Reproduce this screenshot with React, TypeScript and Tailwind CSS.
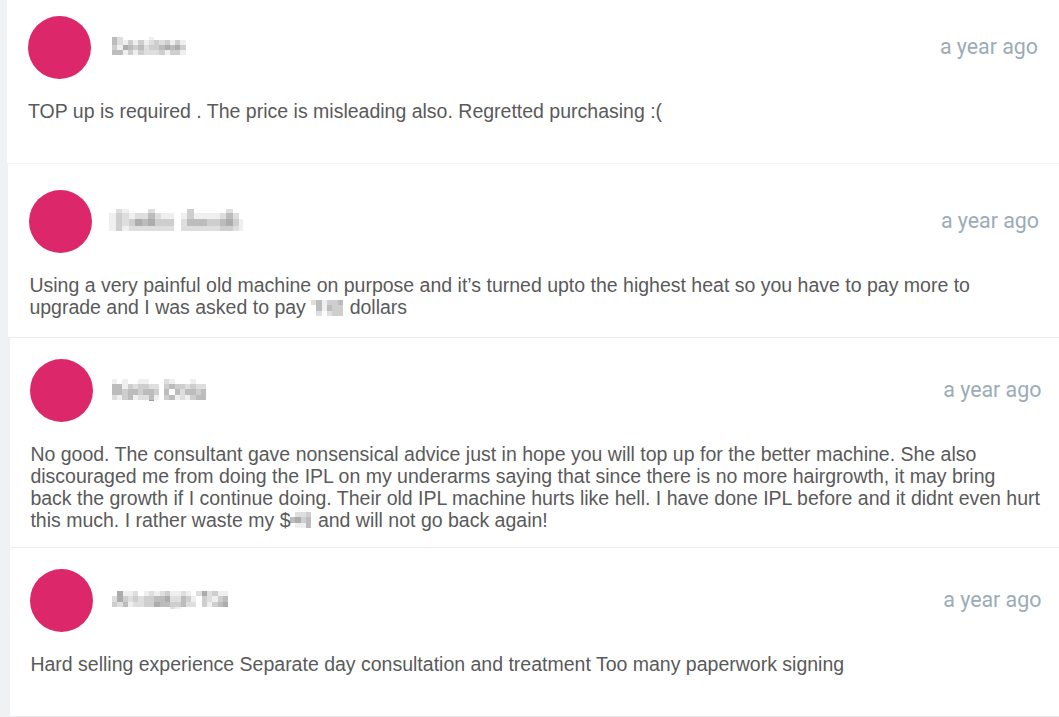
import { Fragment } from 'react';

type Mosaic = {
  cell: number;
  width: number;
  height: number;
  // y, height and one darkness digit (0-9) for every cell of the row
  rows: [number, number, string][];
};

type Review = {
  name: Mosaic;
  nameClass: string;
  text: (string | Mosaic)[];
  card: string;
};

const reviews: Review[] = [
  {
    name: {
      cell: 5.25,
      width: 74,
      height: 18,
      rows: [
        [0, 2.7, '42000001000000'],
        [2.7, 5.1, '42131312323131'],
        [7.8, 5.1, '31543423345453'],
        [12.9, 5.1, '44131322231331'],
      ],
    },
    nameClass: 'ml-[21px] mb-[3px]',
    text: ['TOP up is required . The price is misleading also. Regretted purchasing :('],
    card: 'ml-[7px] h-[164px] border-[#f3f3f5] pt-4 pl-[21px] pr-[21px]',
  },
  {
    name: {
      cell: 6.5,
      width: 134,
      height: 22,
      rows: [
        [0, 3.7, '021000200000300000200'],
        [3.7, 6.5, '132122421101311112420'],
        [10.2, 6.5, '132354533302444334531'],
        [16.7, 5.3, '131222222202222223321'],
      ],
    },
    nameClass: 'ml-[17px] mb-[4px]',
    text: [
      'Using a very painful old machine on purpose and it’s turned upto the highest heat so you have to pay more to upgrade and I was asked to pay ',
      {
        cell: 5.3,
        width: 33,
        height: 16,
        rows: [
          [0, 5.3, '241334'],
          [5.3, 5.3, '041433'],
          [10.6, 5.3, '020233'],
        ],
      },
      ' dollars',
    ],
    card: 'ml-2 h-[174px] border-[#ebecee] pt-[26px] pl-[21.4px] pr-5',
  },
  {
    name: {
      cell: 5.22,
      width: 94,
      height: 23,
      rows: [
        [0, 5.1, '101001100021000100'],
        [5.1, 5.3, '441323322034332322'],
        [10.4, 5.3, '443443443040424434'],
        [15.7, 5.3, '213412241034121344'],
        [21, 1.3, '000000060000000000'],
      ],
    },
    nameClass: 'ml-[19px] mb-[1px]',
    text: [
      'No good. The consultant gave nonsensical advice just in hope you will top up for the better machine. She also discouraged me from doing the IPL on my underarms saying that since there is no more hairgrowth, it may bring back the growth if I continue doing. Their old IPL machine hurts like hell. I have done IPL before and it didnt even hurt this much. I rather waste my $',
      {
        cell: 5.3,
        width: 22,
        height: 17,
        rows: [
          [0, 5.3, '0223'],
          [5.3, 5.3, '4534'],
          [10.6, 5.3, '0114'],
        ],
      },
      ' and will not go back again!',
    ],
    card: 'ml-[10px] h-[210px] border-[#ebecee] pt-[21px] pl-[20.4px] pr-[17.6px]',
  },
  {
    name: {
      cell: 5.28,
      width: 117,
      height: 19,
      rows: [
        [0, 5.3, '0511201212311210252311'],
        [5.3, 5.2, '2532323344522431032134'],
        [10.5, 5.2, '3241223354433422031345'],
        [15.7, 2.6, '0000000000021000000000'],
      ],
    },
    nameClass: 'ml-[19px]',
    text: ['Hard selling experience Separate day consultation and treatment Too many paperwork signing'],
    card: 'ml-[10px] h-[169px] border-[#ebecee] pt-[21px] pl-[20.4px] pr-[17.6px]',
  },
];

function Censored({ mosaic, className }: { mosaic: Mosaic; className?: string }) {
  return (
    <svg
      width={mosaic.width}
      height={mosaic.height}
      viewBox={`0 0 ${mosaic.width} ${mosaic.height}`}
      className={className}
      shapeRendering="crispEdges"
      aria-hidden="true"
    >
      {mosaic.rows.map(([y, height, cells]) =>
        cells.split('').map((level, i) => (
          <rect
            key={`${y}-${i}`}
            x={i * mosaic.cell}
            y={y}
            width={mosaic.cell}
            height={height}
            fill="#222"
            fillOpacity={Number(level) * 0.075}
          />
        ))
      )}
    </svg>
  );
}

function ReviewCard({ review }: { review: Review }) {
  return (
    <article className={`box-border border-b bg-white ${review.card}`}>
      <header className="flex h-[63px] items-center">
        <div className="size-[62.6px] shrink-0 rounded-full bg-[#dc276b]" />
        <Censored mosaic={review.name} className={`shrink-0 ${review.nameClass}`} />
        <time className="mb-[2px] ml-auto font-['Roboto',sans-serif] text-[21.4px] leading-[32px] tracking-[-0.02px] text-[#9cacb7]">
          a year ago
        </time>
      </header>
      <p className="mt-[21px] text-[19.5px] leading-[22px] text-[#5a5a5a]">
        {review.text.map((part, i) => (
          <Fragment key={i}>
            {typeof part === 'string' ? part : <Censored mosaic={part} className="inline-block align-[-2px]" />}
          </Fragment>
        ))}
      </p>
    </article>
  );
}

export default function App() {
  return (
    <main className="h-[717px] overflow-hidden bg-[#f0f1f3] font-['Liberation_Sans',Arial,sans-serif]">
      {reviews.map((review, i) => (
        <ReviewCard key={i} review={review} />
      ))}
    </main>
  );
}
